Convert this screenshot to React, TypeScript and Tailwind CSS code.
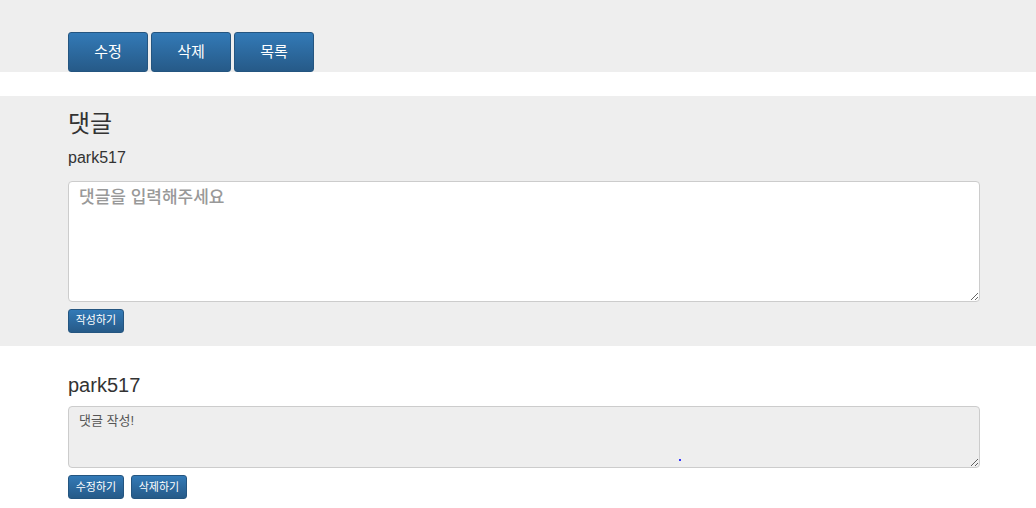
const FONT = "font-['Liberation_Sans','Noto_Sans_CJK_KR',sans-serif]"

function BigButton({ label }: { label: string }) {
  return (
    <button className="h-10 w-20 rounded-[3px] border border-[#245580] bg-gradient-to-b from-[#337ab7] to-[#265a88] text-[15px] text-white">
      {label}
    </button>
  )
}

function SmallButton({ label }: { label: string }) {
  return (
    <button className="h-6 w-14 rounded-[3px] border border-[#245580] bg-gradient-to-b from-[#337ab7] to-[#265a88] text-[11px] leading-none text-white">
      {label}
    </button>
  )
}

export default function App() {
  return (
    <div className={`${FONT} min-h-[508px] w-full bg-white text-[#333]`}>
      {/* actions */}
      <div className="h-[72px] bg-[#eee] pl-[68px] pt-8">
        <div className="flex gap-[3px]">
          <BigButton label="수정" />
          <BigButton label="삭제" />
          <BigButton label="목록" />
        </div>
      </div>

      {/* write comment */}
      <div className="mt-6 h-[250px] bg-[#eee] pl-[68px] pt-[13px]">
        <h3 className="text-[24px] leading-[30px]">댓글</h3>
        <div className="mt-[9px] text-[16px] leading-5">park517</div>
        <textarea
          className="mt-[13px] block h-[121px] w-[912px] rounded border border-[#ccc] bg-white px-[10px] pb-[6px] pt-[3px] text-[17px] font-medium text-[#555] outline-none placeholder:text-[#999]"
          placeholder="댓글을 입력해주세요"
        />
        <div className="mt-[5px]">
          <SmallButton label="작성하기" />
        </div>
      </div>

      {/* comment list */}
      <div className="pl-[68px] pt-[27px]">
        <div className="text-[20px] leading-6">park517</div>
        <div className="relative mt-[9px] w-[912px]">
          <textarea
            readOnly
            className="block h-[62px] w-[912px] rounded border border-[#ccc] bg-[#eee] px-[10px] py-[4px] text-[13px] text-[#555] outline-none"
            defaultValue="댓글 작성!"
          />
          <span className="absolute left-[611px] top-[53px] h-[2px] w-[2px] bg-[#3333ff]" />
        </div>
        <div className="mt-[7px] flex gap-[7px]">
          <SmallButton label="수정하기" />
          <SmallButton label="삭제하기" />
        </div>
      </div>
    </div>
  )
}
